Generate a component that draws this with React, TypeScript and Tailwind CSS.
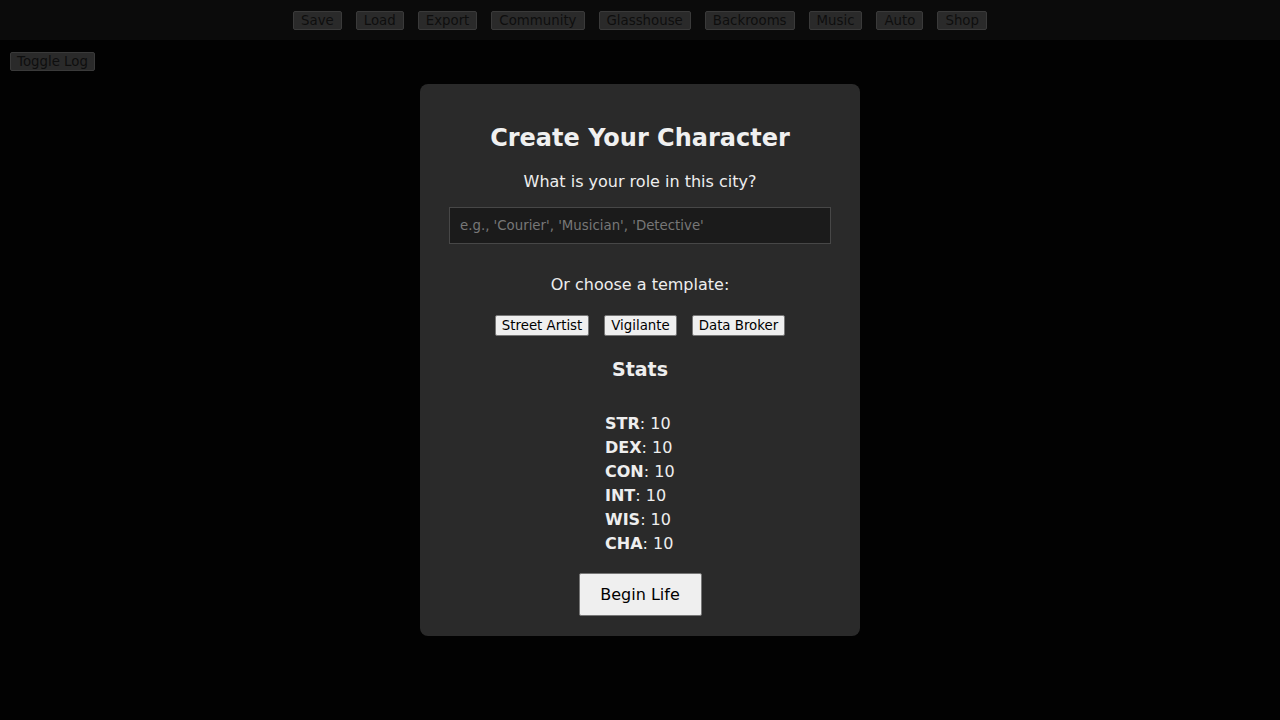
import React from "react";

const navItems = ["Save", "Load", "Export", "Community", "Glasshouse", "Backrooms", "Music", "Auto", "Shop"];
const stats = ["STR", "DEX", "CON", "INT", "WIS", "CHA"];
const templates = ["Street Artist", "Vigilante", "Data Broker"];

export default function App() {
  return (
    <div
      className="w-[1280px] h-[720px] bg-[#020202] text-[#eeeeee] overflow-hidden"
      style={{ fontFamily: "'DejaVu Sans', sans-serif" }}
    >
      <div className="h-[40px] bg-[#0b0b0b] flex items-center justify-center gap-[14px]">
        {navItems.map((n) => (
          <button
            key={n}
            className="h-[19px] px-[7px] text-[13.33px] leading-[15px] text-[#0e0e0e] bg-[#2a2a2a] border border-[#3a3a3a] rounded-[2px]"
          >
            {n}
          </button>
        ))}
      </div>
      <div className="flex pl-[10px] pt-[12px]">
        <button className="h-[19px] px-[6px] text-[13.33px] leading-[15px] text-[#0e0e0e] bg-[#2a2a2a] border border-[#3a3a3a] rounded-[2px]">
          Toggle Log
        </button>
      </div>
      <div className="flex justify-center mt-[13px]">
        <div className="w-[440px] h-[552px] bg-[#2a2a2a] rounded-[8px] flex flex-col items-center pt-[40px]">
          <h2 className="text-[24px] leading-[28px] font-bold text-[#f0f0f0]">Create Your Character</h2>
          <p className="mt-[20px] text-[16px] leading-[19px]">What is your role in this city?</p>
          <input
            placeholder="e.g., 'Courier', 'Musician', 'Detective'"
            className="mt-[16px] w-[382px] h-[37px] bg-[#1b1b1b] border border-[#474747] px-[10px] text-[13.33px] text-[#ddd] placeholder:text-[#777] outline-none"
          />
          <p className="mt-[31px] text-[16px] leading-[19px]">Or choose a template:</p>
          <div className="mt-[21px] flex gap-[15px]">
            {templates.map((t) => (
              <button
                key={t}
                className="h-[21px] px-[6px] text-[13.33px] leading-[15px] text-black bg-[#efefef] border border-[#767676] rounded-[2px]"
              >
                {t}
              </button>
            ))}
          </div>
          <h3 className="mt-[22px] text-[19px] leading-[22px] font-bold">Stats</h3>
          <div className="mt-[32px] text-[16px] leading-[24px] w-[70px] text-left">
            {stats.map((s) => (
              <div key={s} className="whitespace-nowrap">
                <b>{s}</b>: 10
              </div>
            ))}
          </div>
          <button className="mt-[17px] w-[123px] h-[43px] text-[16px] text-black bg-[#efefef] border border-[#767676] rounded-[2px]">
            Begin Life
          </button>
        </div>
      </div>
    </div>
  );
}
